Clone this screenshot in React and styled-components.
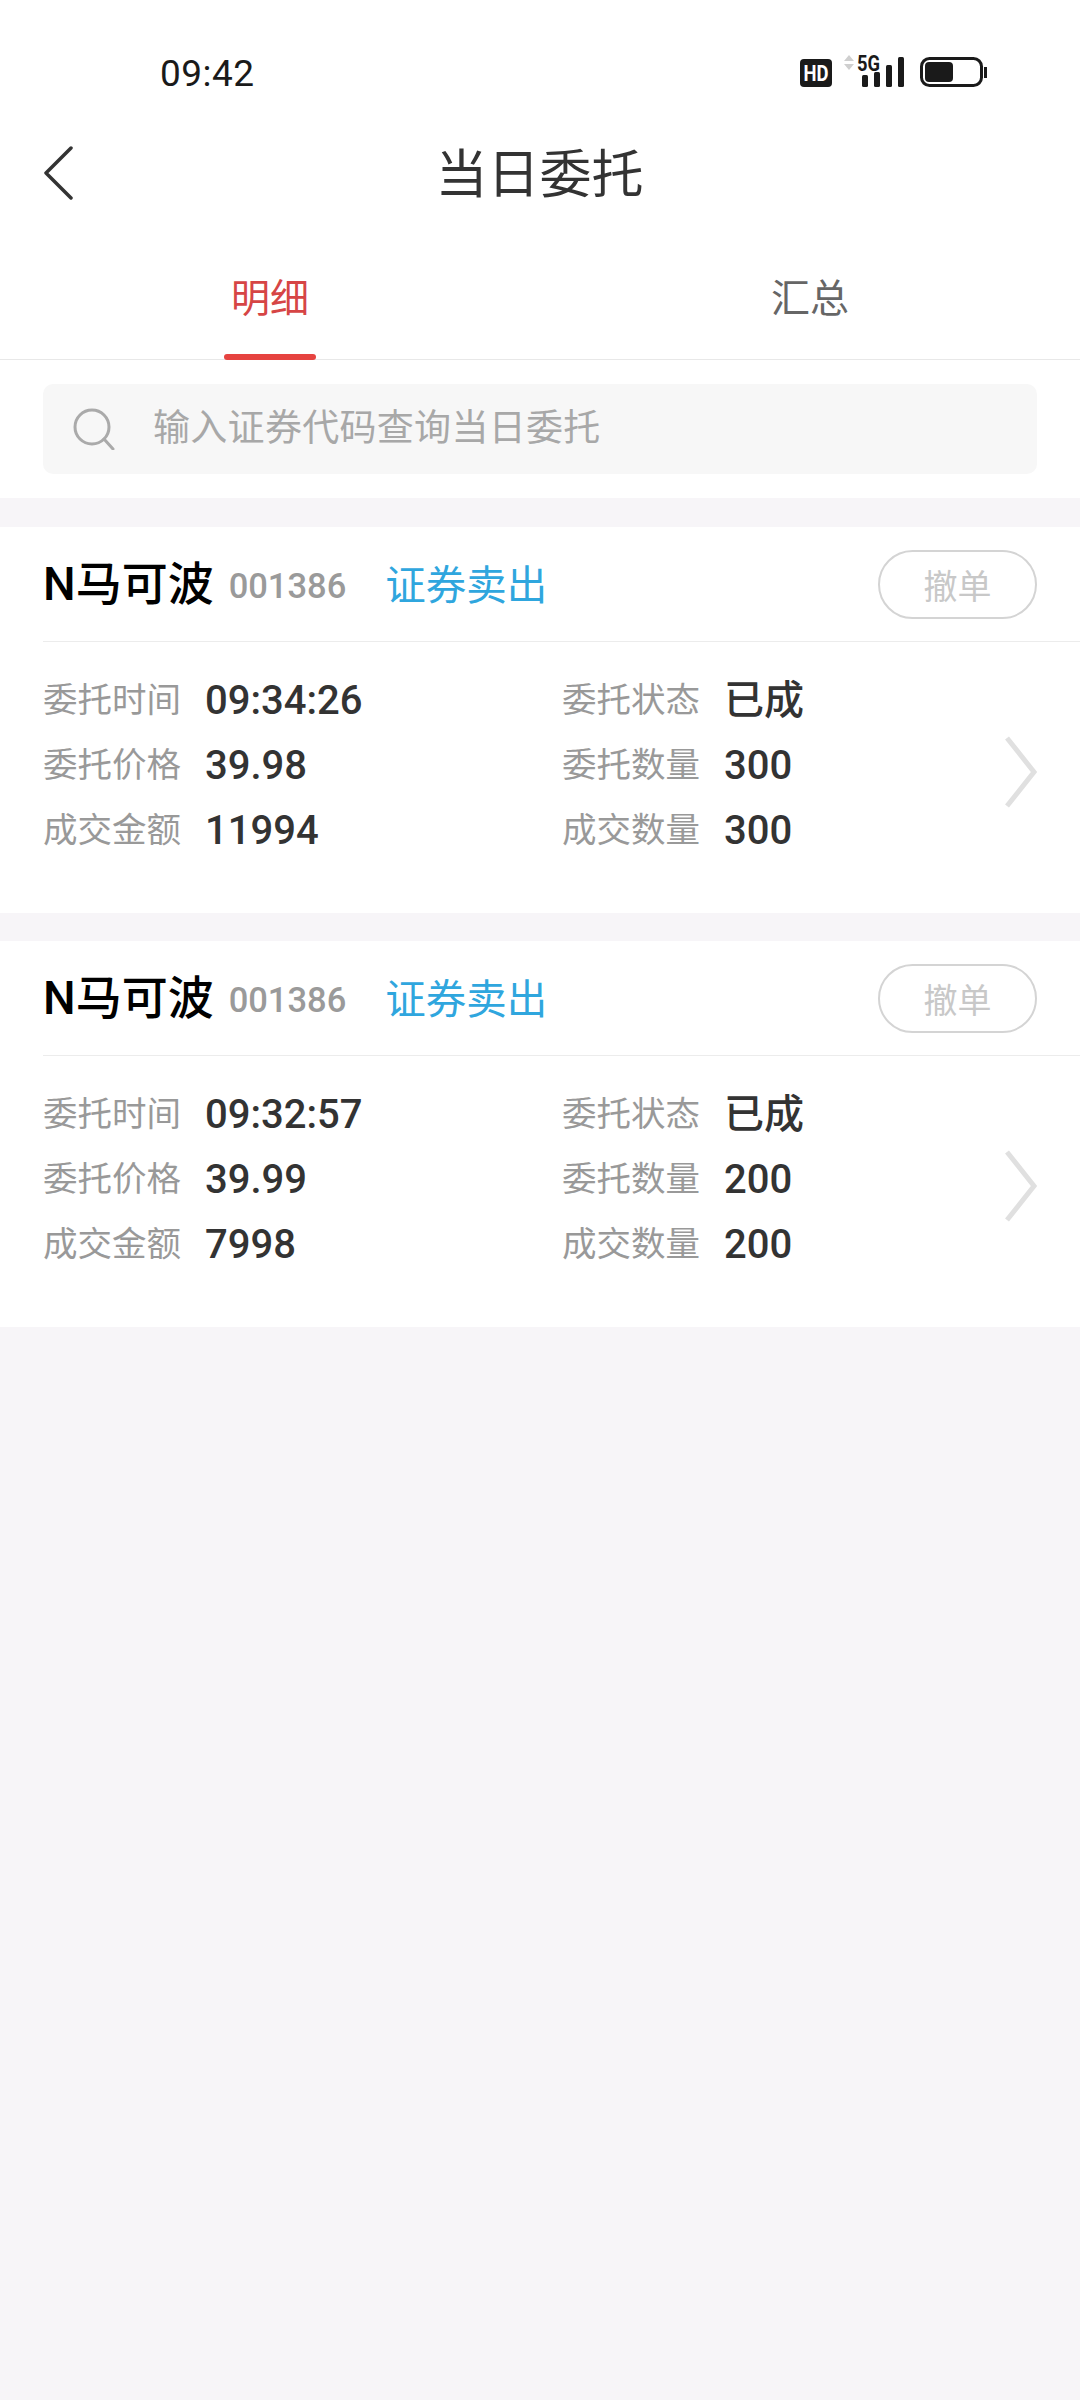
import React from 'react';
import styled, { createGlobalStyle } from 'styled-components';

const Global = createGlobalStyle`
  html, body { margin: 0; padding: 0; background: #f7f5f8; }
  body { font-family: Roboto, "Noto Sans CJK SC", sans-serif; }
  * { box-sizing: border-box; }
`;
const Page = styled.div`
  width: 1080px; min-height: 2400px; background: #f7f5f8; display: flex; flex-direction: column;
`;
const Header = styled.header`background: #fff;`;
const StatusBar = styled.div`
  height: 120px; padding: 53px 93px 0 160px; display: flex; justify-content: space-between; align-items: flex-start;
`;
const Clock = styled.span`font-size: 37px; line-height: 42px; color: #1a1a1a; letter-spacing: 0.5px;`;
const StatusSvg = styled.svg`overflow: visible; display: block;`;
const NavBar = styled.div`
  height: 110px; padding: 0 43px; position: relative; display: flex; align-items: center; justify-content: center;
`;
const BackIcon = styled.svg`position: absolute; left: 43px; top: 26px;`;
const Title = styled.h1`
  margin: 2px 0 0 -1px; font-size: 52px; font-weight: 400; color: #333; line-height: 70px;
`;
const Tabs = styled.div`
  height: 130px; display: flex; border-bottom: 1px solid #e8e8e8;
`;
const Tab = styled.div`
  width: 540px; position: relative; display: flex; justify-content: center; padding-top: 41px;
  font-size: 39px; line-height: 56px; color: ${p => p.$active ? '#d64545' : '#666'};
  &::after {
    content: ''; display: ${p => p.$active ? 'block' : 'none'}; position: absolute; bottom: -1px; left: 224px; width: 92px; height: 6px;
    background: #e64340; border-radius: 3px;
  }
`;
const SearchWrap = styled.div`padding: 24px 43px; background: #fff;`;
const SearchBox = styled.div`
  height: 90px; background: #f7f7f7; border-radius: 10px; display: flex; align-items: center; padding-left: 30px; gap: 38px;
`;
const Placeholder = styled.span`font-size: 37px; line-height: 50px; color: #a8a8a8; letter-spacing: 0.3px;`;
const Card = styled.section`background: #fff; height: 386px; margin-top: ${p => p.$first ? '29px' : '28px'}; padding-left: 43px;`;
const CardHead = styled.div`
  height: 115px; border-bottom: 1.5px solid #ececec; display: flex; align-items: center; padding-right: 43px;
`;
const Name = styled.span`font-size: 46px; font-weight: 500; color: #000; line-height: 60px;`;
const Code = styled.span`margin-left: 15px; font-size: 34.500px; font-weight: 500; color: #9a9a9a; line-height: 60px; padding-top: 3px;`;
const Tag = styled.span`margin-left: 39px; font-size: 40.500px; color: #2fa6de; line-height: 60px; padding-top: 4px;`;
const CancelButton = styled.button`
  margin-left: auto; width: 159px; height: 69px; border: 2px solid #d4d4d4; border-radius: 35px; background: #fff;
  font: inherit; font-size: 34px; color: #c8c8c8; padding: 0;
`;
const Body = styled.div`display: flex; padding-top: 26px; position: relative;`;
const Grid = styled.div`display: grid; grid-template-columns: 519px 1fr; grid-auto-rows: 65px; flex: 1;`;
const Cell = styled.div`display: flex; align-items: center;`;
const Label = styled.span`width: 162px; font-size: 34.500px; color: #999; line-height: 65px;`;
const Value = styled.span`font-size: 40px; font-weight: 500; color: #333; line-height: 65px;`;
const Chevron = styled.svg`position: absolute; right: 42px; top: 94px;`;

const orders = [
  { time: '09:34:26', price: '39.98', qty: '300', amount: '11994', done: '300' },
  { time: '09:32:57', price: '39.99', qty: '200', amount: '7998', done: '200' },
];

function StatusIcons() {
  return (
    <StatusSvg width="190" height="36" viewBox="0 0 190 36">
      <rect x="3" y="6" width="32" height="28" rx="4" fill="#1a1a1a" />
      <text x="19" y="28" fontFamily="Roboto" fontWeight="700" fontSize="22" fill="#fff" textAnchor="middle" textLength="25" lengthAdjust="spacingAndGlyphs">HD</text>
      <path d="M52 2l5 6h-10zM52 17l5-6h-10z" fill="#cfcfcf" />
      <text x="60" y="18" fontFamily="Roboto" fontWeight="700" fontSize="22" fill="#1a1a1a" textLength="23" lengthAdjust="spacingAndGlyphs">5G</text>
      <rect x="65" y="22" width="6" height="12" rx="1.500" fill="#1a1a1a" />
      <rect x="77" y="19" width="6" height="15" rx="1.500" fill="#1a1a1a" />
      <rect x="89" y="12" width="6" height="22" rx="1.500" fill="#1a1a1a" />
      <rect x="101" y="4" width="6" height="30" rx="1.500" fill="#1a1a1a" />
      <rect x="124.500" y="5.500" width="60" height="27" rx="8" fill="none" stroke="#1a1a1a" strokeWidth="3" />
      <rect x="128" y="9" width="28" height="20" rx="4" fill="#1a1a1a" />
      <rect x="187" y="14" width="3" height="11" fill="#1a1a1a" />
    </StatusSvg>
  );
}

function Row({ label, value }) {
  return (
    <Cell>
      <Label>{label}</Label>
      <Value>{value}</Value>
    </Cell>
  );
}

function Order({ o, first }) {
  return (
    <Card $first={first}>
      <CardHead>
        <Name>N马可波</Name>
        <Code>001386</Code>
        <Tag>证券卖出</Tag>
        <CancelButton>撤单</CancelButton>
      </CardHead>
      <Body>
        <Grid>
          <Row label="委托时间" value={o.time} />
          <Row label="委托状态" value="已成" />
          <Row label="委托价格" value={o.price} />
          <Row label="委托数量" value={o.qty} />
          <Row label="成交金额" value={o.amount} />
          <Row label="成交数量" value={o.done} />
        </Grid>
        <Chevron width="34" height="72" viewBox="0 0 34 72" fill="none">
          <path d="M3 2L30 36L3 70" stroke="#e0e0e0" strokeWidth="5" />
        </Chevron>
      </Body>
    </Card>
  );
}

export default function App() {
  return (
    <Page>
      <Global />
      <Header>
        <StatusBar>
          <Clock>09:42</Clock>
          <StatusIcons />
        </StatusBar>
        <NavBar>
          <BackIcon width="30" height="54" viewBox="0 0 30 54" fill="none">
            <path d="M28 2L3 27L28 52" stroke="#333" strokeWidth="3.500" strokeLinecap="round" strokeLinejoin="round" />
          </BackIcon>
          <Title>当日委托</Title>
        </NavBar>
        <Tabs>
          <Tab $active>明细</Tab>
          <Tab>汇总</Tab>
        </Tabs>
        <SearchWrap>
          <SearchBox>
            <svg width="42" height="42" viewBox="0 0 42 42" fill="none">
              <circle cx="19" cy="19" r="17" stroke="#aaa" strokeWidth="3" />
              <path d="M31 31L40 41" stroke="#aaa" strokeWidth="3" strokeLinecap="round" />
            </svg>
            <Placeholder>输入证券代码查询当日委托</Placeholder>
          </SearchBox>
        </SearchWrap>
      </Header>
      {orders.map((o, i) => <Order key={o.time} o={o} first={i === 0} />)}
    </Page>
  );
}
